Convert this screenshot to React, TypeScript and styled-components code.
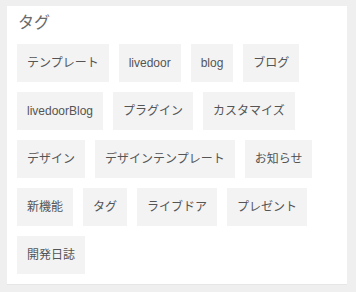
import React from "react";
import styled, { createGlobalStyle } from "styled-components";

const GlobalStyle = createGlobalStyle`
  html, body {
    margin: 0;
    padding: 0;
    background: #efefef;
  }
  body {
    font-family: "Liberation Sans", "Noto Sans CJK JP", sans-serif;
  }
`;

const Page = styled.div`
  width: 356px;
  height: 292px;
  box-sizing: border-box;
  padding: 6px 9px 0 7px;
`;

const Card = styled.section`
  width: 340px;
  box-sizing: border-box;
  background: #fff;
  padding: 5px 10px 10px;
  box-shadow: 0 1px 0 #e6e6e6;
`;

const Title = styled.h2`
  margin: 0 0 9px 1px;
  font-size: 16px;
  line-height: 24px;
  font-weight: normal;
  color: #6a6a6a;
`;

const TagList = styled.ul`
  display: flex;
  flex-wrap: wrap;
  gap: 10px;
  margin: 0;
  padding: 0;
  list-style: none;
`;

const Tag = styled.li`
  height: 38px;
  line-height: 38px;
  padding: 0 10px;
  background: #f3f3f3;
  color: #555;
  font-size: 12px;
  white-space: nowrap;
`;

const tags = [
  "テンプレート",
  "livedoor",
  "blog",
  "ブログ",
  "livedoorBlog",
  "プラグイン",
  "カスタマイズ",
  "デザイン",
  "デザインテンプレート",
  "お知らせ",
  "新機能",
  "タグ",
  "ライブドア",
  "プレゼント",
  "開発日誌",
];

export default function App() {
  return (
    <>
      <GlobalStyle />
      <Page>
        <Card>
          <Title>タグ</Title>
          <TagList>
            {tags.map((t) => (
              <Tag key={t}>{t}</Tag>
            ))}
          </TagList>
        </Card>
      </Page>
    </>
  );
}
